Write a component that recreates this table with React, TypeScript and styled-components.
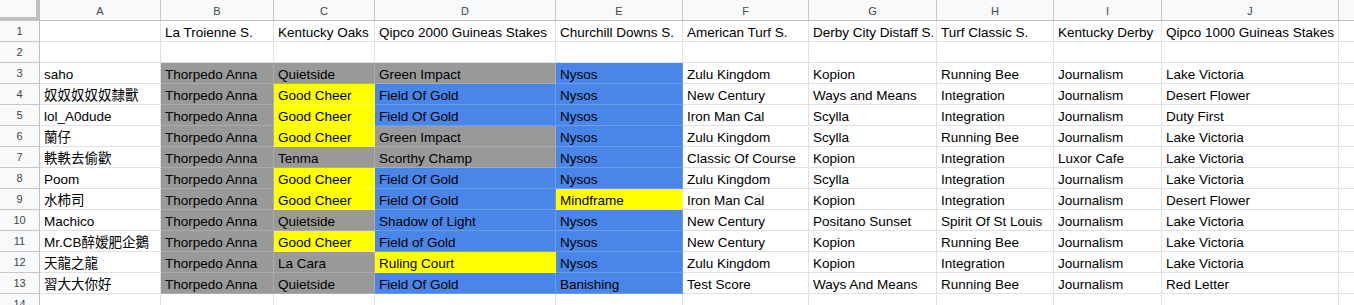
import * as React from "react";
import styled, { createGlobalStyle } from "styled-components";

const GlobalStyle = createGlobalStyle`
  html, body {
    margin: 0;
    padding: 0;
    background: #ffffff;
    overflow: hidden;
  }
`;

// row header + columns A..K (K runs past the right edge)
const columnWidths = [40, 121, 113, 101, 181, 127, 126, 128, 117, 108, 177, 100];
const letters = ["A", "B", "C", "D", "E", "F", "G", "H", "I", "J", "K"];

const fills = {
  none: "transparent",
  gray: "#999999",
  yellow: "#ffff00",
  blue: "#4a86e8",
};
type Fill = keyof typeof fills;

const Viewport = styled.div`
  width: 1354px;
  height: 305px;
  overflow: hidden;
`;

const Sheet = styled.div`
  display: grid;
  grid-template-columns: ${columnWidths.map((w) => `${w}px`).join(" ")};
  grid-auto-rows: 21px;
  font-family: "Liberation Sans", Arial, "Noto Sans CJK TC", sans-serif;
  font-size: 13.5px;
  color: #000;
`;

const Corner = styled.div`
  box-sizing: border-box;
  background: #f8f9fa;
  border-right: 4px solid #c0c0c0;
  border-bottom: 4px solid #c0c0c0;
`;

const ColHead = styled.div`
  box-sizing: border-box;
  background: #f8f9fa;
  border-right: 1px solid #c7c7c7;
  border-bottom: 1px solid #c0c0c0;
  display: flex;
  align-items: center;
  justify-content: center;
  font-size: 11px;
  color: #444746;
  padding-top: 1px;
`;

const RowHead = styled.div`
  box-sizing: border-box;
  background: #f8f9fa;
  border-right: 1px solid #c0c0c0;
  border-bottom: 1px solid #c7c7c7;
  display: flex;
  align-items: center;
  justify-content: center;
  font-size: 11px;
  color: #444746;
`;

const Cell = styled.div<{ $fill: Fill }>`
  box-sizing: border-box;
  background: ${(p) => fills[p.$fill]};
  border-right: 1px solid
    ${(p) => (p.$fill === "none" ? "#e1e1e1" : "rgba(255,255,255,0.18)")};
  border-bottom: 1px solid
    ${(p) => (p.$fill === "none" ? "#e1e1e1" : "rgba(255,255,255,0.18)")};
  padding: 1px 3px 0 4px;
  line-height: 21px;
  white-space: nowrap;
  overflow: hidden;
`;

const headers = [
  "",
  "La Troienne S.",
  "Kentucky Oaks",
  "Qipco 2000 Guineas Stakes",
  "Churchill Downs S.",
  "American Turf S.",
  "Derby City Distaff S.",
  "Turf Classic S.",
  "Kentucky Derby",
  "Qipco 1000 Guineas Stakes",
];

const picks: [string, string[], Fill[]][] = [
  ["saho", ["Thorpedo Anna", "Quietside", "Green Impact", "Nysos", "Zulu Kingdom", "Kopion", "Running Bee", "Journalism", "Lake Victoria"], ["gray", "gray", "gray", "blue"]],
  ["奴奴奴奴奴隸獸", ["Thorpedo Anna", "Good Cheer", "Field Of Gold", "Nysos", "New Century", "Ways and Means", "Integration", "Journalism", "Desert Flower"], ["gray", "yellow", "blue", "blue"]],
  ["lol_A0dude", ["Thorpedo Anna", "Good Cheer", "Field Of Gold", "Nysos", "Iron Man Cal", "Scylla", "Integration", "Journalism", "Duty First"], ["gray", "yellow", "blue", "blue"]],
  ["蘭仔", ["Thorpedo Anna", "Good Cheer", "Green Impact", "Nysos", "Zulu Kingdom", "Scylla", "Running Bee", "Journalism", "Lake Victoria"], ["gray", "yellow", "gray", "blue"]],
  ["軼軼去偷歡", ["Thorpedo Anna", "Tenma", "Scorthy Champ", "Nysos", "Classic Of Course", "Kopion", "Integration", "Luxor Cafe", "Lake Victoria"], ["gray", "gray", "gray", "blue"]],
  ["Poom", ["Thorpedo Anna", "Good Cheer", "Field Of Gold", "Nysos", "Zulu Kingdom", "Scylla", "Integration", "Journalism", "Lake Victoria"], ["gray", "yellow", "blue", "blue"]],
  ["水柿司", ["Thorpedo Anna", "Good Cheer", "Field Of Gold", "Mindframe", "Iron Man Cal", "Kopion", "Integration", "Journalism", "Desert Flower"], ["gray", "yellow", "blue", "yellow"]],
  ["Machico", ["Thorpedo Anna", "Quietside", "Shadow of Light", "Nysos", "New Century", "Positano Sunset", "Spirit Of St Louis", "Journalism", "Lake Victoria"], ["gray", "gray", "blue", "blue"]],
  ["Mr.CB醉嫒肥企鵝", ["Thorpedo Anna", "Good Cheer", "Field of Gold", "Nysos", "New Century", "Kopion", "Running Bee", "Journalism", "Lake Victoria"], ["gray", "yellow", "blue", "blue"]],
  ["天龍之龍", ["Thorpedo Anna", "La Cara", "Ruling Court", "Nysos", "Zulu Kingdom", "Kopion", "Integration", "Journalism", "Lake Victoria"], ["gray", "gray", "yellow", "blue"]],
  ["習大大你好", ["Thorpedo Anna", "Quietside", "Field Of Gold", "Banishing", "Test Score", "Ways And Means", "Running Bee", "Journalism", "Red Letter"], ["gray", "gray", "blue", "blue"]],
];

const emptyRow = (n: number) => (
  <React.Fragment key={n}>
    <RowHead>{n}</RowHead>
    {letters.map((l) => (
      <Cell key={l} $fill="none" />
    ))}
  </React.Fragment>
);

export default function App() {
  return (
    <>
      <GlobalStyle />
      <Viewport>
        <Sheet>
          <Corner />
          {letters.map((l) => (
            <ColHead key={l}>{l}</ColHead>
          ))}

          <RowHead>1</RowHead>
          {headers.map((h, i) => (
            <Cell key={i} $fill="none">
              {h}
            </Cell>
          ))}
          <Cell $fill="none" />

          {emptyRow(2)}

          {picks.map(([name, values, colors], r) => (
            <React.Fragment key={name}>
              <RowHead>{r + 3}</RowHead>
              <Cell $fill="none">{name}</Cell>
              {values.map((v, i) => (
                <Cell key={i} $fill={colors[i] ?? "none"}>
                  {v}
                </Cell>
              ))}
              <Cell $fill="none" />
            </React.Fragment>
          ))}

          {emptyRow(14)}
        </Sheet>
      </Viewport>
    </>
  );
}
